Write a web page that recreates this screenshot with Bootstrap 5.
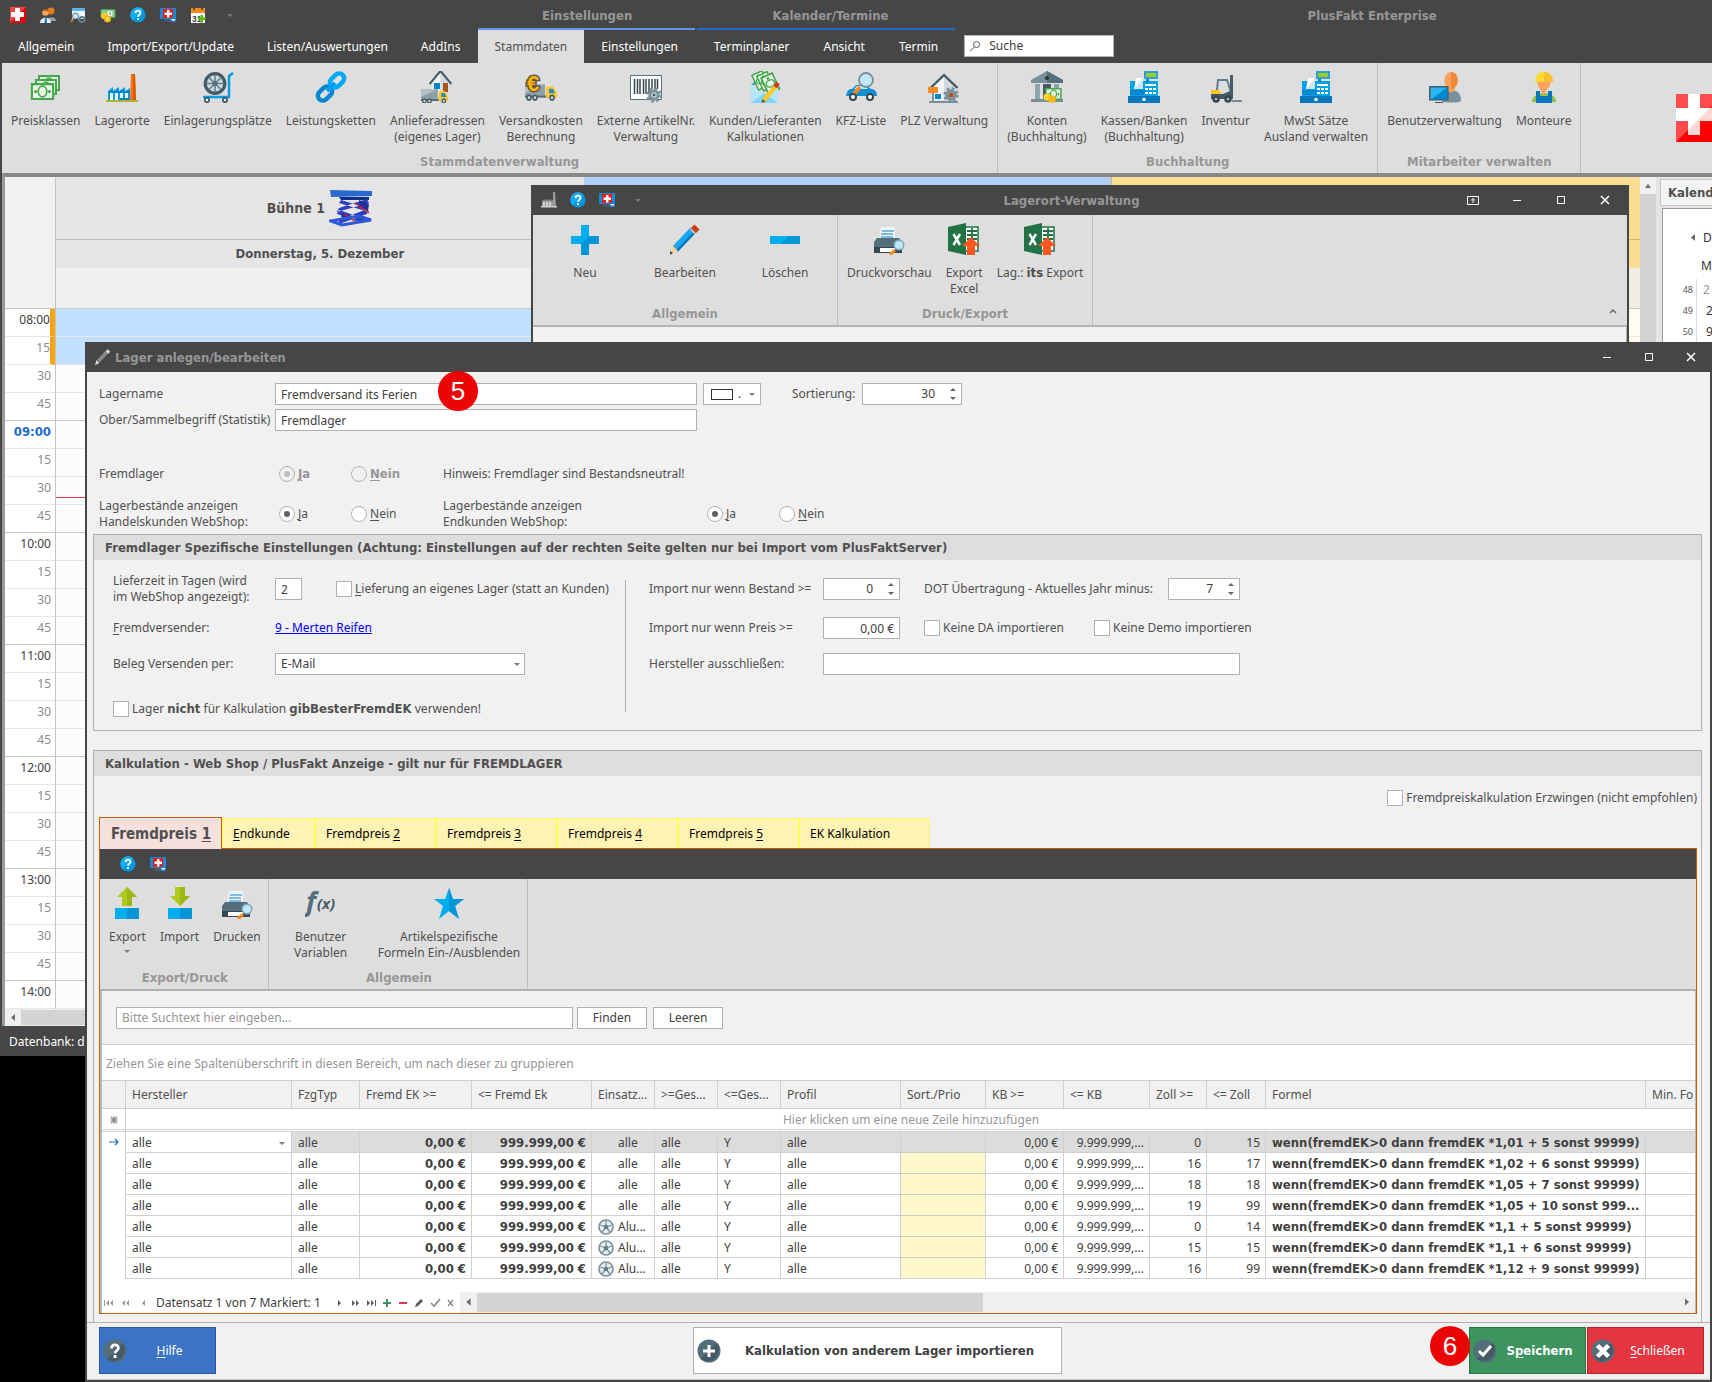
<!DOCTYPE html>
<html lang="de">
<head>
<meta charset="utf-8">
<meta name="viewport" content="width=device-width, initial-scale=1">
<title>PlusFakt Enterprise</title>
<link href="https://cdn.jsdelivr.net/npm/bootstrap@5.3.0/dist/css/bootstrap.min.css" rel="stylesheet">
<style>
:root{--dark:#464646;--rib:#dedede;--panel:#f1f1f1;--line:#b1b1b1;--grid:#cfcfcf;--ink:#505050}
html,body{min-height:100vh}
body{background:#000;color:var(--ink);font:12px/16px "Noto Sans",sans-serif;overflow:hidden;position:relative}
b,.fat{font-family:"DejaVu Sans Condensed","Noto Sans",sans-serif;font-size:13px;font-weight:700}
u{text-underline-offset:2px}
button,input,select{font:inherit;color:inherit}
svg{display:block;flex:none}
.i12{width:12px;height:12px}.i16{width:16px;height:16px}.i24{width:24px;height:24px}.i32{width:32px;height:32px}
.plain{border:0;background:none;padding:0}
.grayt{color:#969696}
/* main window */
.app{border-left:2px solid var(--dark)}
.apphead{background:var(--dark);height:63px;color:#fff}
.caprow{height:28px;padding-top:2px}
.caprow.fat{padding-top:4px}
.apptitle{padding-right:82px}
.tabrow{height:35px}
.tabrow.basic .rtab{padding-left:16px}
.ctx{border-top:2px solid #6494ed;margin-right:2px}
.ctx.deep{border-color:#1f6bd0;margin-right:9px}
.rtab{padding:2px 17px 0;color:#fff;text-decoration:none;display:flex;align-items:center}
.ctx .rtab{padding-top:0}
.rtab.on{background:var(--rib);color:var(--ink)}
.quick{gap:14px;padding-left:8px}
.searchwrap{padding-bottom:6px}
.searchbox{width:150px;height:22px;border:1px solid #b5b5b5;background:#fff;color:#404040;padding:0 4px}
.searchbox input{border:0;outline:0;width:110px;padding:0}
.searchbox input::placeholder{color:#404040}
/* ribbon */
.ribbon{background:var(--rib);height:110px;overflow:hidden}
.rgroup{border-right:1px solid #bdbdbd;padding:0 2px 3px}
.pbox .rgroup{padding-right:0}
.rgroup .fat{color:#969696;text-align:center}
.ribitem{border:0;background:none;padding:8px 7px 0;display:flex;flex-direction:column;align-items:center;gap:10px;white-space:nowrap;color:var(--ink)}
.ribitem.wide{min-width:100px}
/* scheduler */
.sched{border-top:4px solid #888;border-left:3px solid #9a9a9a;background:#fff}
.ruler{width:51px;border-right:1px solid #c4c4c4}
.stage{flex:1 1 0}
.stage-name{font-size:14px}
.c-res{height:63px;border-bottom:1px solid #bdbdbd;background:#e5e5e5}
.c-date{height:28px;line-height:28px;background:#e5e5e5}
.c-all{height:41px;border-bottom:1px solid #c8c8c8;background:#f0f0f0}
.c-head0{height:132px;background:#f1f1f1;border-bottom:1px solid #c8c8c8}
.slot{height:28px;border-bottom:1px solid #e6e6e6;line-height:22px;text-align:right;padding-right:4px;color:#8c8c8c}
.slot.lasth{border-bottom-color:#c8c8c8}
.slot.hour{color:#404040}
.slot.now{color:#1e6bd0;font:700 13px/22px "DejaVu Sans Condensed",sans-serif}
.ruler .sel{border-right:5px solid #ffa60c;padding-right:0}
.col1{background:#fcfcfc}.col1 .sel{background:#c2e0ff}
.nowline{border-top:1px solid #d8394a;top:320px}
.col2 .c-res,.col2 .c-date{background:#b1cdf8}
.col3{background:#fffbf1;border-left:1px solid #d3b76a}
.col3 .c-res,.col3 .c-date{background:#f9de92;border-color:#d3b76a}.col3 .c-all{background:#f1ede4}.col3 .slot{border-color:#eee6d6}
.vs{width:16px;background:#d3d3d3}
.vs svg,.hs svg{background:#f0f0f0}
.side{width:56px;background:#e4e4e4;padding:2px 0 0 4px;overflow:hidden;white-space:nowrap}
.side .hd{background:#f4f4f4;border:1px solid #c4c4c4;border-right:0;height:27px;padding:5px 0 0 7px}
.side .cal{background:#fff;border:1px solid #9c9c9c;border-right:0;margin:2px 0 0 2px;height:600px;padding-top:21px;color:#333}
.cal-top{padding-left:24px;gap:4px;margin-bottom:12px}
.cal-days{margin-bottom:5px;padding-left:38px}
.wk{height:21px}
.wk small{flex:none;font-size:9px;width:33px;text-align:right;padding-right:3px;color:#555}
.wk span{border-left:1px solid #dadada;padding-left:9px;line-height:21px;flex:1}
.wk .grayt{padding-left:6px}
.hs{height:17px;background:#f0f0f0}.hs i{background:#d3d3d3;display:block;flex:1;margin:1px 0}
.statusbar{height:30px;background:var(--dark);color:#fff;padding:8px 7px}
/* windows */
.win{position:absolute;border:2px solid var(--dark);border-top:0;display:flex;flex-direction:column;background:var(--panel)}
.win-lager{left:531px;top:185px;right:83px;height:420px}
.win-lager .ribbon{border-bottom:0}
.win-client{border-top:2px solid #b4b4b4;border-right:1px solid #b4b4b4}
.win-edit{left:85px;top:342px;right:0;bottom:0}
.win-edit .wtitle{margin-right:-2px}
.wtitle{height:30px;background:var(--dark);color:#969696;display:flex;align-items:center;flex:none}
.wtitle .fat{padding-top:2px}
.wquick{gap:13px;padding-left:8px}
.wctl{width:42px;color:#fff;display:flex;justify-content:center}
.win-lager .wctl{width:44px}
/* form */
.fld{height:22px;border:1px solid var(--line);border-radius:0;background:#fff;color:#404040;padding:0 5px;outline:0}
.num{display:flex;align-items:center;height:22px;border:1px solid var(--line);background:#fff;color:#404040}
.num input{border:0;outline:0;background:none;min-width:0;flex:1;text-align:right;padding:0 10px 0 0}
.num .plain{height:9px;width:16px;display:block}
.sel-wrap{position:relative;display:flex}
.sel-wrap select{appearance:none;width:100%}
.sel-wrap svg{position:absolute;right:2px;top:5px;pointer-events:none}
.chk{display:flex;align-items:center;gap:3px;white-space:nowrap}
.chk input{appearance:none;margin:0;width:16px;height:16px;border:1px solid var(--line);background:#fff}
.chk input[type=radio]{border-radius:50%;display:grid;place-items:center}
.chk input[type=radio]:checked::before{content:"";width:6px;height:6px;border-radius:50%;background:#606060}
.chk input:disabled{background:#f1f1f1}.chk input:disabled:checked::before{background:#bcbcbc}
.ftop{position:relative;padding:9px 0 0 12px;height:162px}
.frow{height:26px}
.lab{width:176px;flex:none;white-space:nowrap}
.labr{width:180px}
.rad{width:72px}.rad2{width:92px}.endk{width:264px}
.w27{width:27px}.w72{width:72px}.w77{width:77px}.w100n{width:100px}.w250{width:250px}.w316{width:316px}.w422{width:422px}
.colr{width:58px;margin:0 31px 0 6px;padding:0 2px 0 7px}.colr i{width:22px;height:11px;border:1px solid #333}
.sol{width:70px}
.frad1{height:34px;margin-top:24px}.frad2{height:46px}
.box{border:1px solid var(--line);margin:0 8px 0 6px}
.box>h2{background:var(--rib);height:25px;margin:0;padding:0 11px;line-height:25px}
.box2{margin-top:19px}
.sgrid{display:grid;grid-template-rows:46px 32px 40px 46px;align-items:center;padding-top:6px}
.left-s{grid-template-columns:162px 61px 1fr;width:531px;flex:none;padding-left:19px}
.right-s{grid-template-columns:174px 101px auto 77px;padding-left:23px}
.gspan{grid-column:span 2}.gall{grid-column:1/-1;padding-top:3px}.g3{grid-column:2/-1}
.da{width:170px;flex:none}
.vline{width:1px;background:var(--line);margin:20px 0 18px}
a.lnk{color:#00f}
.badge-no{position:absolute;width:40px;height:40px;border-radius:50%;background:#ec0505;color:#fff;font:26px/40px "Liberation Sans",sans-serif;text-align:center}
.no5{left:351px;top:-1px}.no6{right:240px;top:3px}
/* price tabs */
.erz{padding:14px 4px 0 0;height:41px}
.ptabs{margin-left:5px;height:31px;align-items:flex-end}
.ptab{height:30px;width:121px;border:2px solid #ffff52;border-width:1px 1px 0 1px;background:#fff3b3;color:#000;text-align:left;padding:0 10px}
.ptab.w-first{width:93px}.ptab.w-last{width:130px}
.ptab.on{height:32px;width:123px;margin-bottom:-1px;border:1px solid #c06100;border-bottom:0;background:#f5e0db;color:var(--ink);font:700 15px/30px "DejaVu Sans Condensed",sans-serif;padding:0 11px;z-index:1;white-space:nowrap}
.pbox{border:1px solid #c06100;margin:0 4px 8px 5px;flex:1;min-width:0;background:#fff}
.tb{height:30px;background:var(--dark);padding-left:20px;gap:14px}
.pin{border-left:2px solid #b4b9c4;border-top:2px solid var(--line);background:#fff;border-right:1px solid #b4b9c4}
.find{background:var(--panel);height:54px;border-bottom:1px solid var(--grid);padding:0 14px;gap:4px}
.find .fld{width:457px}.find .fld::placeholder{color:#969696;opacity:1}
.find button{width:70px;height:22px;border:1px solid var(--line);background:#fff;color:#404040;padding:0;margin-right:2px}
.grp{height:36px;padding:0 4px;line-height:37px;border-bottom:1px solid var(--grid);color:#969696}
.tgrid{table-layout:fixed;width:100%;border-collapse:separate;border-spacing:0;color:#404040}
.tgrid th,.tgrid td{border-right:1px solid var(--grid);border-bottom:1px solid var(--grid);padding:2px 5px 0 6px;height:21px;line-height:18px;white-space:nowrap;overflow:hidden;text-overflow:ellipsis}
.tgrid th{font-weight:400;height:28px;padding-top:0;background:#f1f1f1;color:var(--ink)}
.tgrid tr>:last-child{border-right:0;text-overflow:clip}
.tgrid .newr td{height:23px;border-bottom:3px double var(--grid);text-align:center;color:#969696}
.tgrid .ind{background:#fff;border-bottom-color:#fff;padding:0 6px}
.tgrid .cur td{background:#dcdcdc}.tgrid .cur td.ind,.tgrid .cur td.ed{background:#fff}
.tgrid .prio{background:#fff8cc}
.tgrid .sel-wrap svg{top:3px;right:-2px}
.tgrid select{border:0;background:none;padding:0;outline:0}
.navi{height:21px;color:#404040}
.navi .hs{height:21px;flex:1}.navi .hs i{flex:none;width:41%}
.dsz{width:174px}
.foot{border-top:1px solid var(--line);border-bottom:1px solid #c9c9c9;height:58px;padding:4px 6px 0 12px}
.cmd{height:47px;border:1px solid;display:flex;align-items:center;padding:0 3px;color:#fff;width:117px}
.cmd span{flex:1;text-align:center}
.cmd.blue{background:#3b74c6;border-color:#2d599a}
.cmd.mid{width:369px;margin-left:70px;background:#fff;border-color:var(--line);color:#404040}
.cmd.green{background:#3d945f;border-color:#2b7548}.cmd.red{background:#e33641;border-color:#b8222c}
.cmds{gap:1px}
</style>
</head>
<body>
<svg width="0" height="0" class="position-absolute" aria-hidden="true"><defs>
<symbol id="swiss" viewBox="0 0 36 48"><path fill="#ff4d4d" d="M0 0h36v48H0z"/><path fill="#f00" d="M0 48 36 12v36z"/><path fill="#fff" d="M12 0h12v14h12v13H24v14H12V27H0V14h12z"/><path fill="#ffd6d6" d="M34 14h2v13H24v14H12v-5z"/></symbol>
<symbol id="sw16" viewBox="0 0 16 16"><path fill="#ff4040" d="M0 0h16v16H0z"/><path fill="#e80000" d="M0 16 16 0v16z"/><path fill="#fff" d="M5 1h5v4h4v5h-4v4H5v-4H1V5h4z"/></symbol>
<symbol id="users" viewBox="0 0 16 16"><circle cx="11" cy="4" r="3.400" fill="#e87a1c"/><path fill="#8ea1ad" d="M7 14c0-5 9-5 9 0z"/><circle cx="5.500" cy="5.500" r="3.300" fill="#f6a55c"/><path fill="#a5572a" d="M2 5c0-4 7-4 7 0-2-1-4-2-7 0z"/><path fill="#e8eef2" d="M0 16c0-7 11-7 11 0z"/><path fill="#1976c4" d="M5 10h1.500l.5 6H4.500z"/></symbol>
<symbol id="sdoc" viewBox="0 0 16 16"><path fill="#eaf6fd" d="M2 1h13v11H2z"/><path fill="#5cb5e8" d="M2 1h13v3H2z"/><circle cx="5.500" cy="9" r="3" fill="#cdeefc" stroke="#5f7c8a"/><path stroke="#c98030" stroke-width="2" d="m3 12-2 3"/><circle cx="12" cy="12.500" r="2.600" fill="none" stroke="#5f7c8a" stroke-width="2"/></symbol>
<symbol id="mcoin" viewBox="0 0 16 16"><path fill="#8fce8f" stroke="#4a9e4d" d="M1 2.500h14v8H1z"/><circle cx="10" cy="6.500" r="2.500" fill="#fff"/><path fill="#2e7d32" d="M9.500 5h1v3h-1z"/><circle cx="4.500" cy="9" r="3.300" fill="#ffc928"/><circle cx="7.500" cy="12" r="3.500" fill="#f5b400"/><path fill="#ffe082" d="M6.500 10h2v4h-2z"/></symbol>
<symbol id="help" viewBox="0 0 16 16"><circle cx="8" cy="8" r="7.600" fill="#0096e0"/><path fill="#12adf2" d="M2.600 13.400A7.600 7.600 0 0 1 13.400 2.600z"/><path fill="none" stroke="#fff" stroke-width="1.800" d="M5.600 6c0-3.200 5-3.100 5-.2C10.600 7.700 8 7.700 8 10"/><path fill="#fff" d="M7 11.200h2V13H7z"/></symbol>
<symbol id="remote" viewBox="0 0 16 16"><path fill="#0f8cd8" d="M0 1h16v11H0z"/><path fill="#465a64" d="M5 12h6v3H4z"/><path fill="#f01818" d="M3 2h10v9H3z"/><path fill="#fff" d="M7 3h2.500v2.500H12V8H9.500v2.500H7V8H4.500V5.500H7z"/><circle cx="13.300" cy="12.800" r="2.700" fill="#1c7ed6"/><path fill="#fff" d="M11.500 12h3.600v1.500h-3.600z"/></symbol>
<symbol id="cal31" viewBox="0 0 16 16"><path fill="#fff" d="M1 2h14v14H1z"/><path fill="#f68b1e" d="M1 1h14v5H1z"/><path fill="#5a4a3a" d="M3 0h2v3H3zM11 0h2v3h-2z"/><text x="2" y="14.500" font-size="8.500" font-weight="700" font-family="Liberation Sans" fill="#37474f">31</text><path fill="#5cb80c" d="M10.500 8h2.500v2.500h2.500V13H13v2.500h-2.500V13H8v-2.500h2.500z"/></symbol>
<symbol id="dd" viewBox="0 0 12 12"><path fill="#7a7a7a" d="M3 5h6L6 8z"/></symbol>
<symbol id="up" viewBox="0 0 16 9"><path fill="#666" d="M5 6h6L8 3z"/></symbol>
<symbol id="dn" viewBox="0 0 16 9"><path fill="#666" d="M5 3h6L8 6z"/></symbol>
<symbol id="lt" viewBox="0 0 16 17"><path fill="#6a6a6a" d="M10 5v7L6 8.500z"/></symbol>
<symbol id="rt" viewBox="0 0 16 17"><path fill="#6a6a6a" d="M6 5v7l4-3.500z"/></symbol>
<symbol id="note" viewBox="0 0 22 16"><path fill="#e8f5e9" stroke="#46a84d" stroke-width="2" d="M1 1h20v14H1z"/><ellipse cx="11" cy="8" rx="4" ry="5" fill="none" stroke="#46a84d" stroke-width="1.600"/><circle cx="4.500" cy="8" r="1.500" fill="#46a84d"/><circle cx="17.500" cy="8" r="1.500" fill="#46a84d"/></symbol>
<symbol id="cash" viewBox="0 0 32 32"><use href="#note" x="7" y="4" width="24" height="16"/><use href="#note" x="4" y="8" width="24" height="16"/><use href="#note" x="0" y="12" width="25" height="17"/></symbol>
<symbol id="fac" viewBox="0 0 32 32"><path fill="#f37413" d="M25 3h4l1 27h-6z"/><path fill="#d85a00" d="M27 3h2l1 27h-3z"/><path fill="#039be5" d="M2 20l5-4v4l6-4v4l6-4v4l5-3v14H2z"/><path fill="#0277bd" d="M2 20h22v2H2zM14 26h10v4H14z" opacity=".7"/><path fill="#e6f6fe" d="M4 22h3v7H4zM9 22h3v7H9zM14 22h3v5h-3zM19 22h3v5h-3z"/><path fill="#afb42b" d="M0 29h32v2H0z"/></symbol>
<symbol id="facg" viewBox="0 0 16 16"><path fill="#9a9a9a" d="M12 0h2l1 14h-3zM1 9l3-2v2l3-2v2l3-2v2l2-1v6H1z"/><path fill="#d0d0d0" d="M2 10h2v4H2zM5 10h2v4H5zM8 10h2v4H8zM0 14h16v1.500H0z"/></symbol>
<symbol id="wheelcart" viewBox="0 0 32 32"><path fill="none" stroke="#039be5" stroke-width="2.500" d="M31 2l-4 3v21H1"/><circle cx="13" cy="12.500" r="9.800" fill="#cfd8dc" stroke="#455a64" stroke-width="3.200"/><path stroke="#607d8b" stroke-width="1.500" d="M13 4v17M4.500 12.500h17M7 6.500l12 12M19 6.500l-12 12"/><circle cx="13" cy="12.500" r="2.500" fill="#546e7a"/><circle cx="5" cy="29" r="2.200" fill="#fff" stroke="#455a64" stroke-width="1.800"/><circle cx="23" cy="29" r="2.200" fill="#fff" stroke="#455a64" stroke-width="1.800"/></symbol>
<symbol id="chain" viewBox="0 0 32 32"><g fill="none" stroke-width="4.500"><rect x="-8" y="-5" width="16" height="10" rx="5" transform="translate(10 22.500) rotate(-45)" stroke="#0288d1"/><rect x="-8" y="-5" width="16" height="10" rx="5" transform="translate(22 9.500) rotate(-45)" stroke="#03a9f4"/></g><path stroke="#00a0ee" stroke-width="4" d="m12 20 8-8"/></symbol>
<symbol id="truck" viewBox="0 0 32 16" preserveAspectRatio="none"><path fill="#90a0a8" d="M0 1h20v10H0z"/><path fill="#b4c0c6" d="M0 1h20L0 9z"/><path fill="#546e7a" d="M0 11h31v2H0z"/><path fill="#ffc928" d="M21 3h7l4 5v5H21z"/><path fill="#1a8fd8" d="M24 5h4l2 4h-6z"/><g fill="#cfd8dc" stroke="#455a64" stroke-width="1.500"><circle cx="4" cy="13" r="2"/><circle cx="10" cy="13" r="2"/><circle cx="27" cy="13" r="2"/></g></symbol>
<symbol id="house" viewBox="0 0 32 32" preserveAspectRatio="none"><path fill="#f1f3f4" d="M7 12 16 3l9 9v16H7z"/><path fill="#d5dade" d="m16 3 9 9v16h-9z"/><path fill="none" stroke="#455a64" stroke-width="2.200" d="M4 16 16 3l12 13"/></symbol>
<symbol id="houset" viewBox="0 0 32 32"><use href="#house" x="5" y="-3" width="29" height="32"/><path fill="#0288d1" d="M13 12h6v6h-6z"/><path fill="#a8551a" d="M22 12h5v9h-5z"/><use href="#truck" x="0" y="17" width="27" height="16"/></symbol>
<symbol id="eurot" viewBox="0 0 32 32"><use href="#truck" x="0" y="12" width="32" height="18"/><text x="2" y="20" font-family="Liberation Sans" font-weight="700" font-size="22" fill="#ffb300" stroke="#5d5548" stroke-width="3" paint-order="stroke">€</text></symbol>
<symbol id="gear" viewBox="0 0 16 16"><circle cx="8" cy="8" r="6.500" fill="none" stroke="#78909c" stroke-width="2.500" stroke-dasharray="2.600 2.500"/><circle cx="8" cy="8" r="4.200" fill="#cfd8dc" stroke="#78909c" stroke-width="3"/><circle cx="8" cy="8" r="1.400" fill="#455a64"/></symbol>
<symbol id="barc" viewBox="0 0 32 32"><path fill="#fff" stroke="#546e7a" d="M.5 4.500h31v24H.5z"/><path stroke="#37474f" stroke-width="1.500" d="M4.500 8v15M7.500 8v15M10 8v15M13.500 8v15M16 8v15M19 8v15M22 8v10M25 8v10M27.500 8v10"/><use href="#gear" x="16" y="16" width="16" height="16"/></symbol>
<symbol id="env" viewBox="0 0 32 32"><path fill="#29a8e8" d="M2 14 15 1l14 13z"/><use href="#note" x="-9" y="-8" width="18" height="13" transform="translate(10 10) rotate(65)"/><use href="#note" x="-9" y="-8" width="18" height="13" transform="translate(15 11) rotate(65)"/><use href="#note" x="-9" y="-8" width="20" height="14" transform="translate(20 12) rotate(65)"/><path fill="#b3e5fc" d="M2 14l13 11L29 14v18H2z"/><path fill="#81d4fa" d="m2 32 13-10 14 10z"/><path stroke="#ffca28" stroke-width="4.500" d="M15 29 27 15"/><path stroke="#d23b1c" stroke-width="4.500" d="m26 16 3-4"/><path fill="#7a4a20" d="m12.500 32 1-4 3 2.500z"/></symbol>
<symbol id="carm" viewBox="0 0 32 32"><path fill="#0f8fd6" d="M1 25c1-6 3-7 6-7l4-4h10l5 4c4 0 6 3 6 7z"/><path fill="#cdebfa" d="M12 15h8l3 3H9z"/><circle cx="21" cy="9" r="7" fill="#bfe6fa" stroke="#78909c" stroke-width="1.800"/><path stroke="#f68b1e" stroke-width="4" d="m15 16-7 8"/><circle cx="8" cy="26" r="3" fill="#fff" stroke="#37474f" stroke-width="2"/><circle cx="25" cy="26" r="3" fill="#fff" stroke="#37474f" stroke-width="2"/></symbol>
<symbol id="plz" viewBox="0 0 32 32"><use href="#house" x="-2" y="1" width="36" height="32"/><path fill="#78909c" d="M1 30h29v2H1zM4 22h2v8H4z"/><path fill="#f68b1e" d="M0 16h10v6H0z"/><path fill="#0288d1" d="M7 23h6v5H7z"/><use href="#gear" x="15" y="16" width="16" height="16"/><circle cx="23" cy="24" r="2.500" fill="#a8551a"/></symbol>
<symbol id="bank" viewBox="0 0 32 32"><path fill="#78909c" d="M0 9 16 0l16 9v3H0z"/><path fill="#546e7a" d="m16 0 16 9v3H16z"/><circle cx="16" cy="7" r="2" fill="#263238"/><path fill="#90a4ae" d="M4 13h5v15H4zM23 13h5v15h-5z"/><path fill="#455a64" d="M12 13h8v15h-8z"/><path fill="#78909c" d="M0 28h32v3H0z"/><use href="#note" x="13" y="17" width="19" height="12"/><circle cx="16" cy="26" r="3.600" fill="#ffd32a"/><circle cx="21" cy="28" r="3.800" fill="#fbb60e"/></symbol>
<symbol id="kasse" viewBox="0 0 32 32"><path fill="#00a2e8" d="M2 10h28v16H2z"/><path fill="#0277bd" d="M0 25h32v7H0z"/><path fill="#0288d1" d="M18 7h3v4h-3z"/><path fill="#9ccc1c" stroke="#2aa0dc" stroke-width="2" d="M17 1h12v6H17z"/><path fill="#fff" d="M8 7h7v11H6z"/><path fill="#cfe6f2" d="m15 7-9 11h9z"/><path fill="#0277bd" d="M2 19h16v5H2z" opacity=".6"/><g fill="#fff"><path d="M17 13h11v2H17zM17 17h3v2h-3zM21 17h3v2h-3zM25 17h3v2h-3zM17 21h3v2h-3zM21 21h3v2h-3zM25 21h3v2h-3z"/><circle cx="16" cy="28.500" r="1.800"/></g></symbol>
<symbol id="fork" viewBox="0 0 32 32"><path fill="none" stroke="#607d8b" stroke-width="2" d="M7 19 8 9h9l4 12"/><path fill="#fdc422" d="M1 19h8l3 4h8v4H1z"/><path fill="#455a64" d="M1 23h12l7-3v8H1zM20 4h3v24h-3z"/><path stroke="#455a64" stroke-width="1.300" d="M22 30h10"/><g fill="#b0bec5" stroke="#37474f" stroke-width="2.500"><circle cx="6" cy="28" r="2.500"/><circle cx="18" cy="28" r="2.500"/></g></symbol>
<symbol id="benu" viewBox="0 0 32 32"><path fill="#78909c" d="M13 31c0-14 19-16 19-2 0 3-8 3-19 2z"/><ellipse cx="22" cy="9.500" rx="6.700" ry="8.500" fill="#fba35c"/><path fill="#fba35c" d="M18 14h8v5l-4 3-4-3z"/><path fill="#f08a3a" d="M22 1c9 0 9 16 0 17z"/><path fill="#29b6f6" stroke="#455a64" stroke-width="1.500" d="M.8 15.800h18v13h-18z"/><path fill="#0288d1" d="M18.500 16v12.500H2z"/><path fill="#455a64" d="M6 31h8v1.500H6z"/></symbol>
<symbol id="mont" viewBox="0 0 32 32"><path fill="#8bc34a" d="M4 31c0-12 24-12 24 0z"/><path fill="#0277bd" d="M8 20h4v5h8v-5h4v12H8z"/><path fill="#fba35c" d="M9 9h14c0 6-4 9-5 11l-2 5-3-5c-2-3-4-6-4-11z"/><path fill="#fdd835" d="M7 11c0-14 18-14 18 0z"/><path fill="#fbc02d" d="M16 1c6 0 9 5 9 10h-9z"/></symbol>
<symbol id="lift" viewBox="0 0 44 38"><path fill="#2a6ad0" d="M1 1l42 1v5L2 8z"/><path fill="#12308a" d="M10 8h30v3H12z"/><path fill="#2b3fbf" d="m12 11 26 8 2 4-30-9zM38 10 10 19l-2 4 32-9zM10 21l26 9-2 4-26-9zM38 20 10 31v4l28-10z"/><path fill="#1f2f9c" d="m30 11 10 4-1 7-9-5zM14 24l9 3-2 4-9-3z"/><path stroke="#d22" stroke-width="1.500" d="m26 14 14 10M15 25l12 8"/><path fill="none" stroke="#2f58d8" stroke-width="3" d="M2 32l11 4 29-5-12-4z"/></symbol>
<symbol id="plus" viewBox="0 0 32 32"><path fill="#00aeef" d="M12 2h8v11h10v8H20v11h-8V21H2v-8h10z"/><path fill="#0296d6" d="m20 13h10v8H20v11h-8v-11z"/></symbol>
<symbol id="minus" viewBox="0 0 32 32"><path fill="#00aeef" d="M1 13h30v8H1z"/><path fill="#0296d6" d="M19 13h12v8H12z"/></symbol>
<symbol id="pen" viewBox="0 0 32 32"><path stroke="#1aa7f0" stroke-width="7" d="M6 26 24 7"/><path stroke="#0277bd" stroke-width="2.500" d="M8 28 26 9"/><path stroke="#c9400e" stroke-width="7" d="m24 8 4-4"/><path stroke="#b0bec5" stroke-width="7" d="m23 9 1.500-1.500"/><path fill="#fcd59a" d="m3 22 6 6-8 4z"/><path fill="#37474f" d="m1 28 3 2-3 2z"/></symbol>
<symbol id="peng" viewBox="0 0 16 16"><path stroke="#8a8a8a" stroke-width="3.500" d="M3.500 12 12 3"/><path stroke="#ddd" stroke-width="3.500" d="m12 3.500 2-2"/><path fill="#ddd" d="M1.500 11 4.500 14 0 16z"/></symbol>
<symbol id="print" viewBox="0 0 32 32"><path fill="#eef6fa" d="M8 4h14v13H6z"/><path stroke="#5aa8d8" stroke-width="1.500" d="M9 8h12M8 11h12M8 14h12"/><path fill="#546e7a" d="M4 15h22l3 4v11H1V19z"/><path fill="#37474f" d="M1 24h28v6H1z"/><path fill="#fff" d="M7 25h15v4H7z"/><path stroke="#f68b1e" stroke-width="3" d="m22 27-5 5"/><circle cx="26" cy="22" r="4.800" fill="#bfe6fa" stroke="#7aa7bd" stroke-width="1.500"/></symbol>
<symbol id="xls" viewBox="0 0 32 32"><path fill="#fff" stroke="#217346" stroke-width="1.500" d="M17 4h13v24H17z"/><path stroke="#217346" stroke-width="1.800" d="M19 8h10M19 12h10M19 16h10M24 5v12"/><path fill="#217346" d="M0 4 18 0v32L0 28z"/><path stroke="#fff" stroke-width="2.500" d="m5.500 11 6.500 11M12 11 5.500 22"/><path fill="#ff5722" d="m23 14 9 9h-5v9h-8v-9h-5z"/></symbol>
<symbol id="expo" viewBox="0 0 32 32"><path fill="#00aeef" d="M4 21h24v11H4z"/><path fill="#0296d6" d="M16 21h12v11H16z"/><path fill="#afca1f" d="m16 0 10 10h-5v9H11v-9H6z"/><path fill="#9bb81a" d="m16 0 10 10h-5v9h-5z"/></symbol>
<symbol id="impo" viewBox="0 0 32 32"><path fill="#00aeef" d="M4 21h24v11H4z"/><path fill="#0296d6" d="M16 21h12v11H16z"/><path fill="#afca1f" d="M11 0h10v9h5L16 19 6 9h5z"/><path fill="#9bb81a" d="M16 0h5v9h5L16 19z"/></symbol>
<symbol id="fx" viewBox="0 0 32 32"><text x="1" y="24" font-family="Open Sans" font-weight="700" font-style="italic" font-size="27" fill="#546e7a">f</text><text x="12" y="22" font-family="Open Sans" font-weight="700" font-style="italic" font-size="15" fill="#455a64">(x)</text></symbol>
<symbol id="star" viewBox="0 0 32 32"><path fill="#00aeef" d="m16 1 4 11h11l-9 7 4 13-10-8-10 8 4-13-9-7h11z"/><path fill="#0296d6" d="m16 1 4 11h11l-9 7 4 13-10-8z"/></symbol>
<symbol id="disc" viewBox="0 0 24 24"><circle cx="12" cy="12" r="11.500" fill="#546e7a"/><path fill="#455a64" d="M20 4a11.500 11.500 0 0 1-16 16z"/></symbol>
<symbol id="rim" viewBox="0 0 16 16"><circle cx="8" cy="8" r="7" fill="#eceff1" stroke="#78909c" stroke-width="1.600"/><path stroke="#78909c" stroke-width="1.300" d="M8 8V2M8 8l6-2M8 8l4 5M8 8l-4 5M8 8 2 6"/><circle cx="8" cy="8" r="2.300" fill="#607d8b"/></symbol>
<symbol id="min" viewBox="0 0 12 12"><path stroke="#fff" d="M2 6.500h8"/></symbol>
<symbol id="max" viewBox="0 0 12 12"><path fill="none" stroke="#fff" d="M2.500 2.500h7v7h-7z"/></symbol>
<symbol id="cls" viewBox="0 0 12 12"><path stroke="#fff" stroke-width="1.500" d="m2 2 8 8M10 2l-8 8"/></symbol>
<symbol id="pinw" viewBox="0 0 12 12"><path fill="none" stroke="#fff" d="M.5 2.500h11v8H.5zM6 9V5M4 6.500l2-2 2 2"/></symbol>
</defs></svg>

<div class="app">
  <header class="apphead d-flex">
    <div>
      <div class="caprow d-flex align-items-center quick">
        <svg class="i16"><use href="#sw16"/></svg><svg class="i16"><use href="#users"/></svg><svg class="i16"><use href="#sdoc"/></svg><svg class="i16"><use href="#mcoin"/></svg><svg class="i16"><use href="#help"/></svg><svg class="i16"><use href="#remote"/></svg><svg class="i16"><use href="#cal31"/></svg><svg class="i12 ms-1"><use href="#dd"/></svg>
      </div>
      <nav class="tabrow basic d-flex"><a class="rtab" href="#">Allgemein</a><a class="rtab" href="#">Import/Export/Update</a><a class="rtab" href="#">Listen/Auswertungen</a><a class="rtab" href="#">AddIns</a></nav>
    </div>
    <div>
      <div class="caprow d-flex justify-content-center align-items-center fat grayt">Einstellungen</div>
      <nav class="tabrow d-flex ctx"><a class="rtab on" href="#">Stammdaten</a><a class="rtab" href="#">Einstellungen</a></nav>
    </div>
    <div>
      <div class="caprow d-flex justify-content-center align-items-center fat grayt">Kalender/Termine</div>
      <nav class="tabrow d-flex ctx deep"><a class="rtab" href="#">Terminplaner</a><a class="rtab" href="#">Ansicht</a><a class="rtab" href="#">Termin</a></nav>
    </div>
    <div class="searchwrap d-flex align-items-end"><label class="searchbox d-flex align-items-center gap-2"><svg class="i12" viewBox="0 0 12 12" fill="none" stroke="#555"><circle cx="7.500" cy="4.500" r="3"/><path d="M5.500 7 1 11"/></svg><input type="text" placeholder="Suche" aria-label="Suche"></label></div>
    <div class="caprow apptitle flex-grow-1 d-flex justify-content-center align-items-center fat grayt">PlusFakt Enterprise</div>
  </header>

  <div class="ribbon d-flex">
    <section class="rgroup d-flex flex-column justify-content-between"><div class="d-flex align-items-start">
      <button class="ribitem"><svg class="i32"><use href="#cash"/></svg><span>Preisklassen</span></button>
      <button class="ribitem"><svg class="i32"><use href="#fac"/></svg><span>Lagerorte</span></button>
      <button class="ribitem"><svg class="i32"><use href="#wheelcart"/></svg><span>Einlagerungsplätze</span></button>
      <button class="ribitem"><svg class="i32"><use href="#chain"/></svg><span>Leistungsketten</span></button>
      <button class="ribitem"><svg class="i32"><use href="#houset"/></svg><span>Anlieferadressen<br>(eigenes Lager)</span></button>
      <button class="ribitem"><svg class="i32"><use href="#eurot"/></svg><span>Versandkosten<br>Berechnung</span></button>
      <button class="ribitem"><svg class="i32"><use href="#barc"/></svg><span>Externe ArtikelNr.<br>Verwaltung</span></button>
      <button class="ribitem"><svg class="i32"><use href="#env"/></svg><span>Kunden/Lieferanten<br>Kalkulationen</span></button>
      <button class="ribitem"><svg class="i32"><use href="#carm"/></svg><span>KFZ-Liste</span></button>
      <button class="ribitem"><svg class="i32"><use href="#plz"/></svg><span>PLZ Verwaltung</span></button>
    </div><div class="fat">Stammdatenverwaltung</div></section>
    <section class="rgroup d-flex flex-column justify-content-between"><div class="d-flex align-items-start">
      <button class="ribitem"><svg class="i32"><use href="#bank"/></svg><span>Konten<br>(Buchhaltung)</span></button>
      <button class="ribitem"><svg class="i32"><use href="#kasse"/></svg><span>Kassen/Banken<br>(Buchhaltung)</span></button>
      <button class="ribitem"><svg class="i32"><use href="#fork"/></svg><span>Inventur</span></button>
      <button class="ribitem"><svg class="i32"><use href="#kasse"/></svg><span>MwSt Sätze<br>Ausland verwalten</span></button>
    </div><div class="fat">Buchhaltung</div></section>
    <section class="rgroup d-flex flex-column justify-content-between"><div class="d-flex align-items-start">
      <button class="ribitem"><svg class="i32"><use href="#benu"/></svg><span>Benutzerverwaltung</span></button>
      <button class="ribitem"><svg class="i32"><use href="#mont"/></svg><span>Monteure</span></button>
    </div><div class="fat">Mitarbeiter verwalten</div></section>
    <div class="ms-auto d-flex align-items-center"><svg width="36" height="48"><use href="#swiss"/></svg></div>
  </div>

  <main class="sched d-flex">
    <div class="flex-grow-1">
      <div class="d-flex">
        <div class="ruler"><div class="c-head0"></div><div data-slots="ruler"></div></div>
        <div class="stage col1 position-relative"><div class="c-res d-flex align-items-center justify-content-center fat gap-1"><span class="stage-name">Bühne 1</span><svg width="44" height="38"><use href="#lift"/></svg></div><div class="c-date fat text-center">Donnerstag, 5. Dezember</div><div class="c-all"></div><div data-slots="stage"></div><div class="nowline position-absolute w-100"></div></div>
        <div class="stage col2"><div class="c-res"></div><div class="c-date"></div><div class="c-all"></div><div data-slots="stage"></div></div>
        <div class="stage col3"><div class="c-res"></div><div class="c-date"></div><div class="c-all"></div><div data-slots="stage"></div></div>
      </div>
      <div class="hs d-flex"><svg width="16" height="17"><use href="#lt"/></svg><i></i><svg width="16" height="17"><use href="#rt"/></svg></div>
    </div>
    <div class="vs"><svg width="16" height="17" viewBox="0 0 16 17"><path fill="#6a6a6a" d="M5 11h6L8 7z"/></svg></div>
    <aside class="side"><div class="hd fat">Kalend</div><div class="cal">
      <div class="d-flex align-items-center cal-top"><svg width="12" height="12" viewBox="0 0 12 12"><path fill="#666" d="M8 2v7L4 5.500z"/></svg><span>D</span></div>
      <div class="cal-days">M</div>
      <div class="wk d-flex align-items-center"><small>48</small><span class="grayt">2</span></div><div class="wk d-flex align-items-center"><small>49</small><span>2</span></div><div class="wk d-flex align-items-center"><small>50</small><span>9</span></div>
    </div></aside>
  </main>
  <footer class="statusbar">Datenbank: d</footer>
</div>

<section class="win win-lager">
  <div class="wtitle"><div class="d-flex align-items-center wquick"><svg class="i16"><use href="#facg"/></svg><svg class="i16"><use href="#help"/></svg><svg class="i16"><use href="#remote"/></svg><svg class="i12 ms-1"><use href="#dd"/></svg></div>
    <div class="fat flex-grow-1 text-center ps-5">Lagerort-Verwaltung</div>
    <button class="plain wctl" aria-label="Anheften"><svg class="i12"><use href="#pinw"/></svg></button><button class="plain wctl" aria-label="Minimieren"><svg class="i12"><use href="#min"/></svg></button><button class="plain wctl" aria-label="Maximieren"><svg class="i12"><use href="#max"/></svg></button><button class="plain wctl" aria-label="Schließen"><svg class="i12"><use href="#cls"/></svg></button></div>
  <div class="ribbon d-flex flex-shrink-0">
    <section class="rgroup d-flex flex-column justify-content-between"><div class="d-flex align-items-start">
      <button class="ribitem wide"><svg class="i32"><use href="#plus"/></svg><span>Neu</span></button>
      <button class="ribitem wide"><svg class="i32"><use href="#pen"/></svg><span>Bearbeiten</span></button>
      <button class="ribitem wide"><svg class="i32"><use href="#minus"/></svg><span>Löschen</span></button>
    </div><div class="fat">Allgemein</div></section>
    <section class="rgroup d-flex flex-column justify-content-between"><div class="d-flex align-items-start">
      <button class="ribitem"><svg class="i32"><use href="#print"/></svg><span>Druckvorschau</span></button>
      <button class="ribitem"><svg class="i32"><use href="#xls"/></svg><span>Export<br>Excel</span></button>
      <button class="ribitem"><svg class="i32"><use href="#xls"/></svg><span>Lag.: <b>its</b> Export</span></button>
    </div><div class="fat">Druck/Export</div></section>
    <div class="ms-auto mt-auto pb-2 pe-2"><svg class="i12" viewBox="0 0 12 12" fill="none" stroke="#666" stroke-width="1.500"><path d="m3 8 3-3 3 3"/></svg></div>
  </div>
  <div class="win-client flex-grow-1"></div>
</section>

<section class="win win-edit">
  <div class="wtitle"><svg class="i16 mx-1 ms-2"><use href="#peng"/></svg><div class="fat flex-grow-1">Lager anlegen/bearbeiten</div>
    <button class="plain wctl" aria-label="Minimieren"><svg class="i12"><use href="#min"/></svg></button><button class="plain wctl" aria-label="Maximieren"><svg class="i12"><use href="#max"/></svg></button><button class="plain wctl" aria-label="Schließen"><svg class="i12"><use href="#cls"/></svg></button></div>

  <form class="flex-grow-1 d-flex flex-column">
    <div class="ftop">
      <div class="d-flex align-items-center frow"><label class="lab" for="ln">Lagername</label><input id="ln" class="fld w422" value="Fremdversand its Ferien">
        <button type="button" class="fld colr d-flex align-items-center justify-content-between"><i></i><span>.</span><svg class="i12"><use href="#dd"/></svg></button>
        <label for="so" class="sol">Sortierung:</label><div class="num w100n"><input id="so" value="30"><span><button type="button" class="plain" aria-label="mehr"><svg width="16" height="9"><use href="#up"/></svg></button><button type="button" class="plain" aria-label="weniger"><svg width="16" height="9"><use href="#dn"/></svg></button></span></div></div>
      <div class="d-flex align-items-center frow"><label class="lab" for="ob">Ober/Sammelbegriff (Statistik)</label><input id="ob" class="fld w422" value="Fremdlager"></div>
      <div class="d-flex align-items-center frad1"><span class="lab labr">Fremdlager</span><label class="chk rad grayt fat"><input type="radio" name="f" checked disabled><span><u>J</u>a</span></label><label class="chk rad2 grayt fat"><input type="radio" name="f" disabled><span><u>N</u>ein</span></label><span>Hinweis: Fremdlager sind Bestandsneutral!</span></div>
      <div class="d-flex align-items-center frad2"><span class="lab labr">Lagerbestände anzeigen<br>Handelskunden WebShop:</span><label class="chk rad"><input type="radio" name="h" checked><span><u>J</u>a</span></label><label class="chk rad2"><input type="radio" name="h"><span><u>N</u>ein</span></label><span class="endk">Lagerbestände anzeigen<br>Endkunden WebShop:</span><label class="chk rad"><input type="radio" name="e" checked><span><u>J</u>a</span></label><label class="chk rad"><input type="radio" name="e"><span><u>N</u>ein</span></label></div>
      <span class="badge-no no5">5</span>
    </div>

    <section class="box"><h2 class="fat">Fremdlager Spezifische Einstellungen (Achtung: Einstellungen auf der rechten Seite gelten nur bei Import vom PlusFaktServer)</h2>
      <div class="d-flex">
        <div class="sgrid left-s">
          <label for="lz">Lieferzeit in Tagen (wird<br>im WebShop angezeigt):</label><div><input id="lz" class="fld w27" value="2"></div><label class="chk"><input type="checkbox"><span><u>L</u>ieferung an eigenes Lager (statt an Kunden)</span></label>
          <span><u>F</u>remdversender:</span><a class="lnk gspan" href="#">9 - Merten Reifen</a>
          <label for="bv">Beleg Versenden per:</label><div class="sel-wrap gspan w250"><select id="bv" class="fld"><option>E-Mail</option></select><svg class="i12"><use href="#dd"/></svg></div>
          <label class="chk gall"><input type="checkbox"><span>Lager <b>nicht</b> für Kalkulation <b>gibBesterFremdEK</b> verwenden!</span></label>
        </div>
        <div class="vline"></div>
        <div class="sgrid right-s">
          <label for="ib">Import nur wenn Bestand &gt;=</label><div class="num w77"><input id="ib" value="0"><span><button type="button" class="plain" aria-label="mehr"><svg width="16" height="9"><use href="#up"/></svg></button><button type="button" class="plain" aria-label="weniger"><svg width="16" height="9"><use href="#dn"/></svg></button></span></div>
          <div class="d-flex align-items-center gspan"><label for="dj" class="flex-grow-1">DOT Übertragung - Aktuelles Jahr minus:</label><div class="num w72"><input id="dj" value="7"><span><button type="button" class="plain" aria-label="mehr"><svg width="16" height="9"><use href="#up"/></svg></button><button type="button" class="plain" aria-label="weniger"><svg width="16" height="9"><use href="#dn"/></svg></button></span></div></div>
          <label for="ip">Import nur wenn Preis &gt;=</label><div class="d-flex"><input id="ip" class="fld w77 text-end" value="0,00 €"></div>
          <div class="d-flex gspan w316"><label class="chk da"><input type="checkbox"><span>Keine DA importieren</span></label><label class="chk"><input type="checkbox"><span>Keine Demo importieren</span></label></div>
          <label for="ha">Hersteller ausschließen:</label><input id="ha" class="fld g3">
        </div>
      </div>
    </section>

    <section class="box box2 flex-grow-1 d-flex flex-column border-bottom-0"><h2 class="fat">Kalkulation - Web Shop / PlusFakt Anzeige - gilt nur für FREMDLAGER</h2>
      <div class="d-flex justify-content-end align-items-start erz"><label class="chk"><input type="checkbox"><span>Fremdpreiskalkulation Erzwingen (nicht empfohlen)</span></label></div>
      <div class="d-flex ptabs"><button type="button" class="ptab on">Fremdpreis <u>1</u></button><button type="button" class="ptab w-first"><u>E</u>ndkunde</button><button type="button" class="ptab">Fremdpreis <u>2</u></button><button type="button" class="ptab">Fremdpreis <u>3</u></button><button type="button" class="ptab">Fremdpreis <u>4</u></button><button type="button" class="ptab">Fremdpreis <u>5</u></button><button type="button" class="ptab w-last">EK Kalkulation</button></div>
      <div class="pbox d-flex flex-column">
        <div class="tb d-flex align-items-center"><svg class="i16"><use href="#help"/></svg><svg class="i16"><use href="#remote"/></svg></div>
        <div class="ribbon d-flex flex-shrink-0">
          <section class="rgroup d-flex flex-column justify-content-between"><div class="d-flex align-items-start">
            <button type="button" class="ribitem"><svg class="i32"><use href="#expo"/></svg><span>Export<svg class="i12 mx-auto"><use href="#dd"/></svg></span></button>
            <button type="button" class="ribitem"><svg class="i32"><use href="#impo"/></svg><span>Import</span></button>
            <button type="button" class="ribitem"><svg class="i32"><use href="#print"/></svg><span>Drucken</span></button>
          </div><div class="fat">Export/Druck</div></section>
          <section class="rgroup d-flex flex-column justify-content-between"><div class="d-flex align-items-start">
            <button type="button" class="ribitem wide"><svg class="i32"><use href="#fx"/></svg><span>Benutzer<br>Variablen</span></button>
            <button type="button" class="ribitem"><svg class="i32"><use href="#star"/></svg><span>Artikelspezifische<br>Formeln Ein-/Ausblenden</span></button>
          </div><div class="fat">Allgemein</div></section>
        </div>
        <div class="pin flex-grow-1 d-flex flex-column">
          <div class="find d-flex align-items-center"><input class="fld" placeholder="Bitte Suchtext hier eingeben..." aria-label="Suchtext"><button type="button">Finden</button><button type="button">Leeren</button></div>
          <div class="grp">Ziehen Sie eine Spaltenüberschrift in diesen Bereich, um nach dieser zu gruppieren</div>
          <table class="tgrid"><colgroup><col style="width:24px"><col style="width:166px"><col style="width:68px"><col style="width:112px"><col style="width:120px"><col style="width:63px"><col style="width:63px"><col style="width:63px"><col style="width:120px"><col style="width:85px"><col style="width:78px"><col style="width:86px"><col style="width:57px"><col style="width:59px"><col style="width:380px"><col></colgroup>
            <thead><tr><th></th><th>Hersteller</th><th>FzgTyp</th><th>Fremd EK &gt;=</th><th>&lt;= Fremd Ek</th><th>Einsatz...</th><th>&gt;=Ges...</th><th>&lt;=Ges...</th><th>Profil</th><th>Sort./Prio</th><th>KB &gt;=</th><th>&lt;= KB</th><th>Zoll &gt;=</th><th>&lt;= Zoll</th><th>Formel</th><th>Min. Fo</th></tr></thead>
            <tbody id="rows"><tr class="newr"><td><svg class="i12" viewBox="0 0 12 12" stroke="#8a8a8a" stroke-width="1.200"><path d="M6 2v8M2 6h8M3 3l6 6M9 3 3 9"/></svg></td><td colspan="15">Hier klicken um eine neue Zeile hinzuzufügen</td></tr></tbody></table>
          <div class="navi d-flex align-items-center mt-auto">
            <svg width="54" height="12" viewBox="2 0 54 12" fill="#9a9a9a"><path d="M4 3h1v6H4zM9 3v6L6 6zM13 3v6l-3-3zM25 3v6l-3-3zM29 3v6l-3-3zM45 3v6l-3-3z"/></svg>
            <span class="dsz">Datensatz 1 von 7 Markiert: 1</span>
            <svg width="130" height="12" viewBox="2 0 130 12" fill="#5a5a5a"><path d="M10 3v6l3-3zM24 3v6l3-3zM28 3v6l3-3zM39 3v6l3-3zM43 3v6l3-3zM47 3h1v6h-1z"/><path fill="#3d945f" d="M58 2h2v3h3v2h-3v3h-2V7h-3V5h3z"/><path fill="#e33641" d="M71 5h8v2h-8z"/><path d="m87 10 1-3 5-5 2 2-5 5z"/><path fill="none" stroke="#888" stroke-width="1.600" d="m103 6 3 3 6-7"/><path fill="none" stroke="#888" stroke-width="1.300" d="m120 3 5 6M125 3l-5 6"/></svg>
            <div class="hs d-flex"><svg width="17" height="20"><use href="#lt"/></svg><i></i><svg width="16" height="20" class="ms-auto"><use href="#rt"/></svg></div>
          </div>
        </div>
      </div>
    </section>

    <div class="foot d-flex align-items-start justify-content-between position-relative">
      <button type="button" class="cmd blue"><svg class="i24" viewBox="0 0 24 24"><use href="#disc"/><path fill="none" stroke="#fff" stroke-width="2.600" d="M8.500 9.500c0-5 7-4.500 7-.500 0 2.500-3.500 2.500-3.500 5.500"/><path fill="#fff" d="M10.500 16h3v3h-3z"/></svg><span><u>H</u>ilfe</span></button>
      <button type="button" class="cmd mid"><svg class="i24" viewBox="0 0 24 24"><use href="#disc"/><path fill="#fff" d="M10.500 6h3v4.500H18v3h-4.500V18h-3v-4.500H6v-3h4.500z"/></svg><span class="fat">Kalkulation von anderem Lager importieren</span></button>
      <div class="d-flex cmds"><button type="button" class="cmd green"><svg class="i24" viewBox="0 0 24 24"><use href="#disc"/><path fill="none" stroke="#fff" stroke-width="3" d="m6 12 4 4 8-9"/></svg><span class="fat">S<u>p</u>eichern</span></button><button type="button" class="cmd red"><svg class="i24" viewBox="0 0 24 24"><use href="#disc"/><path stroke="#fff" stroke-width="4.500" d="m6.500 6.500 11 11M17.500 6.500l-11 11"/></svg><span><u>S</u>chließen</span></button></div>
      <span class="badge-no no6">6</span>
    </div>
  </form>
</section>

<script src="https://cdn.jsdelivr.net/npm/bootstrap@5.3.0/dist/js/bootstrap.bundle.min.js"></script>
<script>
// quarter-hour slots from 08:00 to 14:00
document.querySelectorAll('[data-slots]').forEach(el => {
  const ruler = el.dataset.slots === 'ruler';
  for (let i = 0; i < 25; i++) {
    const d = document.createElement('div'), h = 8 + Math.floor(i / 4), q = i % 4;
    d.className = 'slot' + (q === 0 ? ' hour' : '') + (q === 3 ? ' lasth' : '') + (i < 2 ? ' sel' : '') + (i === 4 && ruler ? ' now' : '');
    if (ruler) d.textContent = q ? q * 15 : String(h).padStart(2, '0') + ':00';
    el.append(d);
  }
});
// price rows: rim icon, Zoll from, Zoll to, formula
const data = [[0,0,15,'1,01 + 5 sonst 99999)'],[0,16,17,'1,02 + 6 sonst 99999)'],[0,18,18,'1,05 + 7 sonst 99999)'],[0,19,99,'1,05 + 10 sonst 999...'],[1,0,14,'1,1 + 5 sonst 99999)'],[1,15,15,'1,1 + 6 sonst 99999)'],[1,16,99,'1,12 + 9 sonst 99999)']];
document.getElementById('rows').insertAdjacentHTML('beforeend', data.map(([rim, a, b, f], i) => `<tr class="${i ? '' : 'cur'}"><td class="ind">${i ? '' : '<svg class="i12" viewBox="0 0 12 12" fill="none" stroke="#1e6bd0" stroke-width="1.200"><path d="M1 6h9M7 3l3 3-3 3"/></svg>'}</td>
<td class="${i ? '' : 'ed'}">${i ? 'alle' : '<div class="sel-wrap"><select aria-label="Hersteller"><option>alle</option></select><svg class="i12"><use href="#dd"/></svg></div>'}</td><td>alle</td><td class="text-end fat">0,00 €</td><td class="text-end fat">999.999,00 €</td>
<td><div class="d-flex align-items-center gap-1">${rim ? '<svg class="i16"><use href="#rim"/></svg>' : '<span class="i16"></span>'}<span>${rim ? 'Alu...' : 'alle'}</span></div></td><td>alle</td><td>Y</td><td>alle</td><td class="${i ? 'prio' : ''}"></td><td class="text-end">0,00 €</td><td class="text-end">9.999.999,...</td><td class="text-end">${a}</td><td class="text-end">${b}</td><td class="fat">wenn(fremdEK&gt;0 dann fremdEK *${f}</td><td></td></tr>`).join(''));
</script>
</body>
</html>
